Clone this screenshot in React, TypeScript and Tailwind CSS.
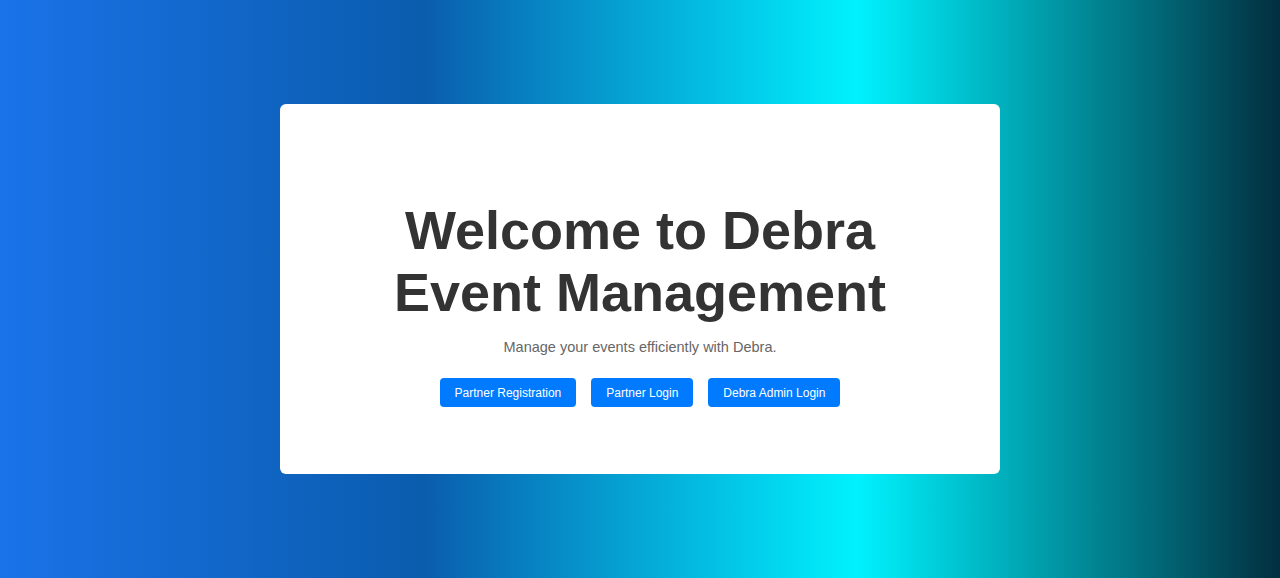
export default function App() {
  return (
    <div
      className="flex h-[578px] w-full items-center justify-center bg-[linear-gradient(90deg,#1a73e8_0%,#0a5cad_33%,#00f2fe_67%,#022f3f_100%)]"
      style={{ fontFamily: '"Liberation Sans", Arial, sans-serif' }}
    >
      {/* Welcome card */}
      <div className="flex h-[370px] w-[720px] flex-col items-center rounded-md bg-white pt-[95px] text-center">
        <h1 className="text-[54px] font-bold leading-[62px] text-[#333333]">
          Welcome to Debra
          <br />
          Event Management
        </h1>
        <p className="mt-[16px] text-[14.5px] leading-[17px] text-[#666666]">
          Manage your events efficiently with Debra.
        </p>
        <div className="mt-[22px] flex gap-[15px]">
          <button className="h-[29px] rounded bg-[#007bff] px-[15px] text-[12px] text-white">
            Partner Registration
          </button>
          <button className="h-[29px] rounded bg-[#007bff] px-[15px] text-[12px] text-white">
            Partner Login
          </button>
          <button className="h-[29px] rounded bg-[#007bff] px-[15px] text-[12px] text-white">
            Debra Admin Login
          </button>
        </div>
      </div>
    </div>
  )
}
